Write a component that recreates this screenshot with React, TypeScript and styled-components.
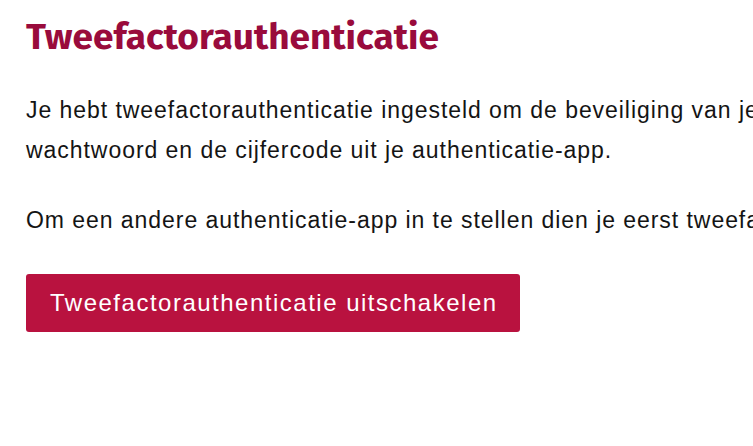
import styled, { createGlobalStyle } from "styled-components";

const GlobalStyle = createGlobalStyle`
  html, body {
    margin: 0;
    padding: 0;
    background: #fff;
  }
  body {
    font-family: "Liberation Sans", Arial, sans-serif;
    color: #151515;
  }
`;

const Page = styled.main`
  width: 753px;
  box-sizing: border-box;
  padding: 15px 26px;
  white-space: nowrap;
  overflow: hidden;
`;

const Title = styled.h1`
  margin: 0 0 31px;
  font-family: "Fira Sans", "Lato", "Noto Sans", sans-serif;
  font-weight: 700;
  font-size: 37px;
  line-height: 44px;
  color: #990b3c;
`;

const Paragraph = styled.p<{ $gap: number }>`
  margin: 0 0 ${(p) => p.$gap}px;
  font-size: 23px;
  letter-spacing: 0.95px;
  line-height: 40px;
  color: #141414;
`;

const DisableButton = styled.button`
  display: inline-flex;
  align-items: center;
  height: 58px;
  padding: 0 22px 0 24px;
  border: none;
  border-radius: 3px;
  background: #b9123f;
  color: #fff;
  font-family: "Liberation Sans", Arial, sans-serif;
  font-size: 24px;
  letter-spacing: 1.5px;
  cursor: pointer;
`;

const App = () => {
  return (
    <>
      <GlobalStyle />
      <Page>
        <Title>Tweefactorauthenticatie</Title>
        <Paragraph $gap={30}>
          Je hebt tweefactorauthenticatie ingesteld om de beveiliging van je account te verhogen. Log voortaan in met je
          <br />
          wachtwoord en de cijfercode uit je authenticatie-app.
        </Paragraph>
        <Paragraph $gap={34}>
          Om een andere authenticatie-app in te stellen dien je eerst tweefactorauthenticatie uit te schakelen.
        </Paragraph>
        <DisableButton>Tweefactorauthenticatie uitschakelen</DisableButton>
      </Page>
    </>
  );
};

export default App;
